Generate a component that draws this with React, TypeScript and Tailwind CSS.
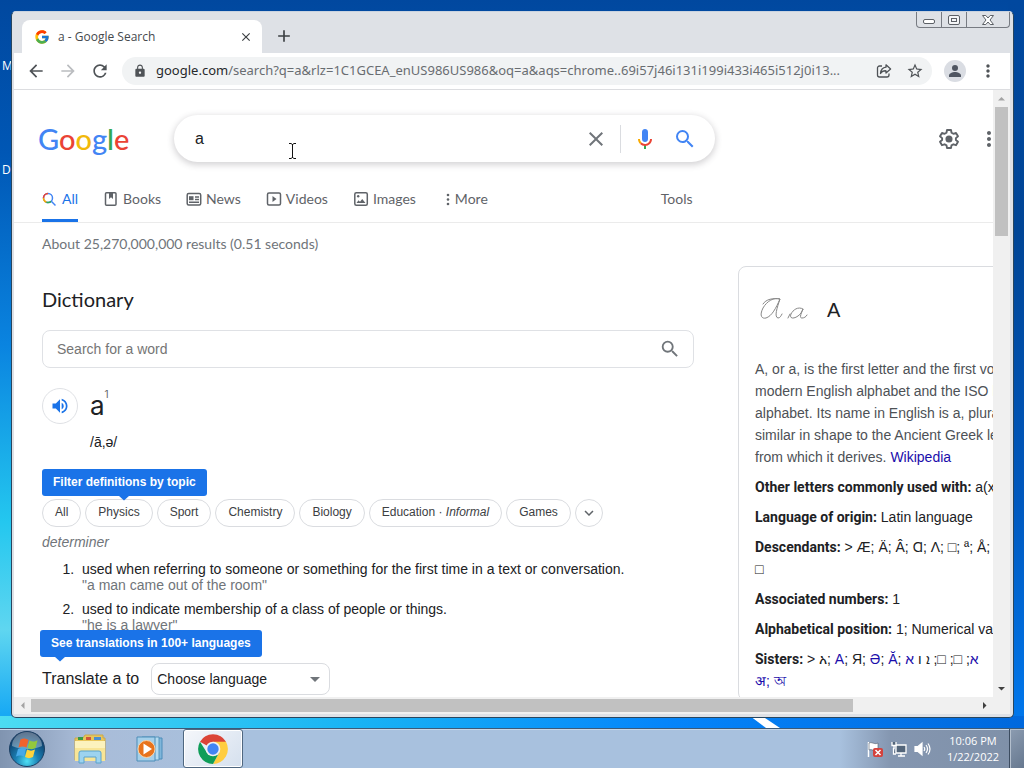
import type { ReactNode } from "react";
import { FcGoogle } from "react-icons/fc";
import {
  MdAdd,
  MdArrowBack,
  MdArrowForward,
  MdClose,
  MdExpandMore,
  MdLock,
  MdMoreVert,
  MdRefresh,
  MdSearch,
  MdStarBorder,
  MdVolumeUp,
} from "react-icons/md";

const segoe = "font-['Open_Sans','Noto_Sans',sans-serif]";
const product = "font-['Lato','Inter',sans-serif]";
const arial = "font-['Liberation_Sans',Arial,sans-serif]";

function TabStrip() {
  return (
    <div className={`${segoe} flex items-start bg-[#dee1e6] pl-2`}>
      <div className="mt-2 flex h-[33px] w-60 items-center rounded-t-lg bg-white pr-2 pl-3">
        <FcGoogle className="size-4" />
        <span className="ml-2 flex-1 text-xs text-[#45494d]">a - Google Search</span>
        <button aria-label="Close tab" className="flex size-4 items-center justify-center text-[#3c4043]">
          <MdClose className="size-3.5" />
        </button>
      </div>
      <button aria-label="New tab" className="mt-3.5 ml-3 text-[#3c4043]">
        <MdAdd className="size-5" />
      </button>
      <div className="ml-auto flex h-4 rounded-b-[4px] border border-t-0 border-[#777b82] text-[#5c6066]">
        <button aria-label="Minimize" className="flex w-[25px] items-center justify-center border-r border-[#777b82]">
          <svg width="14" height="12" viewBox="0 0 14 12" fill="none" stroke="currentColor">
            <rect x="1.5" y="5.5" width="11" height="4" rx="1.5" fill="#fff" />
          </svg>
        </button>
        <button aria-label="Restore" className="flex w-[25px] items-center justify-center border-r border-[#777b82]">
          <svg width="14" height="12" viewBox="0 0 14 12" fill="none" stroke="currentColor">
            <rect x="1.5" y="1.5" width="11" height="9" rx="1.5" fill="#f4f5f7" />
            <rect x="4.5" y="4.5" width="5" height="3" />
          </svg>
        </button>
        <button aria-label="Close" className="flex w-[42px] items-center justify-center">
          <svg width="14" height="12" viewBox="0 0 14 12" fill="#fff" stroke="currentColor">
            <path d="M1.5 1.5h3.3L7 4l2.2-2.5h3.3L9 6l3.5 4.5H9.2L7 8l-2.2 2.5H1.500L5 6z" />
          </svg>
        </button>
      </div>
    </div>
  );
}

function Toolbar() {
  return (
    <div className={`${segoe} flex h-[37px] shrink-0 items-center border-b border-[#dcdde0] bg-white pr-3 pl-3 text-[#4f5357]`}>
      <button aria-label="Back"><MdArrowBack className="size-5" /></button>
      <button aria-label="Forward" className="ml-3 text-[#bbbdc0]"><MdArrowForward className="size-5" /></button>
      <button aria-label="Reload" className="ml-3"><MdRefresh className="size-5" /></button>
      <div className="ml-3 flex h-7 min-w-0 flex-1 items-center rounded-full bg-[#f1f3f4] pr-2 pl-[11px]">
        <MdLock className="size-3.5 shrink-0" />
        <div className="ml-[9px] min-w-0 flex-1 overflow-hidden font-['Noto_Sans',sans-serif] text-[13px] whitespace-nowrap text-[#696d71]">
          <span className="text-[#27292c]">google.com</span>
          /search?q=a&amp;rlz=1C1GCEA_enUS986US986&amp;oq=a&amp;aqs=chrome..69i57j46i131i199i433i465i512j0i13...
        </div>
        <button aria-label="Share" className="mr-3.5">
          <svg width="16" height="16" viewBox="0 0 16 16" fill="none" stroke="currentColor" strokeWidth="1.3" strokeLinejoin="round">
            <path d="M6 3H3.500A2 2 0 0 0 1.500 5v7a2 2 0 0 0 2 2h7.500a2 2 0 0 0 2-2v-1.500" />
            <path d="M10 1.800 14.600 6 10 10V7.800C7.500 7.600 5.800 8.500 4.500 10.500 4.800 7 6.800 4.600 10 4.200z" />
          </svg>
        </button>
        <button aria-label="Bookmark this page"><MdStarBorder className="size-[18px]" /></button>
      </div>
      <button aria-label="Profile" className="ml-3 flex size-[22px] items-center justify-center rounded-full bg-[#dadde3]">
        <svg width="14" height="14" viewBox="0 0 14 14" fill="#4f5561">
          <circle cx="7" cy="4" r="3" />
          <path d="M1 13v-1.500C1 9.200 4.500 8 7 8s6 1.200 6 3.500V13z" />
        </svg>
      </button>
      <button aria-label="Browser menu" className="ml-3"><MdMoreVert className="size-5" /></button>
    </div>
  );
}

function SearchHeader() {
  return (
    <div className="flex items-center pt-[25px] pl-6">
      <a href="#home" aria-label="Google" className={`${product} w-[136px] text-[29px] leading-[46px] font-medium`}>
        <span className="text-[#4285f4]">G</span>
        <span className="text-[#ea4335]">o</span>
        <span className="text-[#f2b90a]">o</span>
        <span className="text-[#4285f4]">g</span>
        <span className="text-[#34a853]">l</span>
        <span className="text-[#ea4335]">e</span>
      </a>
      <form className="flex h-[47px] w-[541px] items-center rounded-full bg-white pr-[18px] pl-[21px] shadow-[0_2px_6px_1px_rgba(64,60,67,0.22)]">
        <input aria-label="Search" defaultValue="a" className={`${arial} min-w-0 flex-1 text-base text-[#202124] outline-none`} />
        <button type="button" aria-label="Clear" className="text-[#70757a]"><MdClose className="size-6" /></button>
        <span className="mx-3 h-7 w-px bg-[#dadce0]" />
        <button type="button" aria-label="Search by voice">
          <svg width="24" height="24" viewBox="0 0 24 24">
            <path fill="#4285f4" d="M12 15c1.700 0 3-1.300 3-3V5c0-1.700-1.300-3-3-3S9 3.300 9 5v7c0 1.700 1.300 3 3 3z" />
            <path fill="#34a853" d="M11 18.100h2V22h-2z" />
            <path fill="#f9ab00" d="M7 12H5c0 1.900.8 3.700 2.100 5l1.400-1.400C7.600 14.700 7 13.400 7 12z" />
            <path fill="#ea4335" d="M12 17c-1.400 0-2.600-.5-3.500-1.400L7.100 17c1.200 1.200 3 2 4.900 2 3.900 0 7-3.100 7-7h-2c0 2.800-2.200 5-5 5z" />
          </svg>
        </button>
        <button type="submit" aria-label="Google Search" className="ml-4 text-[#4285f4]"><MdSearch className="size-6" /></button>
      </form>
      <button aria-label="Settings" className="ml-auto text-[#5f6368]">
        <svg width="24" height="24" viewBox="0 0 24 24" fill="none" stroke="currentColor" strokeWidth="1.9" strokeLinejoin="round">
          <path d="M10 3h4l.5 2.700 1.900 1.100L19 5.900l2 3.400-2.100 1.800v2l2.100 1.700-2 3.400-2.600-.9-1.900 1.100L14 21h-4l-.5-2.600-1.900-1.100-2.600.9-2-3.400 2.100-1.700v-2L3 9.300l2-3.400 2.600.9 1.900-1.100z" />
          <circle cx="12" cy="12" r="2.6" fill="currentColor" />
        </svg>
      </button>
      <button aria-label="Google apps" className="-mr-2 ml-4 text-[#5f6368]"><MdMoreVert className="size-6" /></button>
    </div>
  );
}

function NavIcon({ children }: { children: ReactNode }) {
  return (
    <svg width="16" height="16" viewBox="0 0 16 16" fill="none" stroke="currentColor" strokeWidth="1.5">
      {children}
    </svg>
  );
}

function NavTabs() {
  return (
    <nav className={`${product} mt-4 flex h-[45px] items-stretch gap-[25px] border-b border-[#ebebeb] pl-7 text-[14px] text-[#5f6368]`}>
      <a href="#all" className="flex items-center gap-[5px] border-b-[3px] border-[#1a73e8] text-[#1a73e8]">
        <svg width="15" height="16" viewBox="0 0 15 16" fill="none" strokeWidth="1.5">
          <circle cx="6" cy="7" r="4.5" stroke="#4285f4" />
          <path d="M1.500 7A4.500 4.500 0 0 1 6 2.500" stroke="#ea4335" />
          <path d="M1.500 7a4.500 4.500 0 0 0 3 4.200" stroke="#f9ab00" />
          <path d="M4.500 11.200a4.500 4.500 0 0 0 4.700-1" stroke="#34a853" />
          <path d="m9.300 10.300 4.200 4.200" stroke="#4285f4" />
        </svg>
        All
      </a>
      <a href="#books" className="flex items-center gap-1 pb-[3px]">
        <NavIcon><rect x="2.5" y="1.8" width="10.5" height="12.5" rx="1" /><path d="M6 2v6l2-1.700L10 8V2z" fill="currentColor" stroke="none" /></NavIcon>
        Books
      </a>
      <a href="#news" className="flex items-center gap-1 pb-[3px]">
        <NavIcon><rect x="1.2" y="2.5" width="13.5" height="11.5" rx="1.5" /><path d="M9 6h4M9 8.500h4M3 11.200h10" /><rect x="3" y="5.2" width="4.5" height="4" fill="currentColor" stroke="none" /></NavIcon>
        News
      </a>
      <a href="#videos" className="flex items-center gap-1 pb-[3px]">
        <NavIcon><rect x="1.5" y="2" width="13" height="12" rx="1.5" /><path d="M6.500 5v6l4-3z" fill="currentColor" stroke="none" /></NavIcon>
        Videos
      </a>
      <a href="#images" className="flex items-center gap-1 pb-[3px]">
        <NavIcon><rect x="1.8" y="1.8" width="12.5" height="12.5" rx="1.5" /><path d="M3.500 12l2-2.800 1.500 1.600 2.200-2.800 3.300 4z" fill="currentColor" stroke="none" /><circle cx="5.2" cy="5.2" r="1.2" fill="currentColor" stroke="none" /></NavIcon>
        Images
      </a>
      <button className="ml-1 flex items-center gap-1 pb-[3px]">
        <svg width="6" height="16" viewBox="0 0 6 16" fill="currentColor">
          <circle cx="3" cy="4" r="1.3" /><circle cx="3" cy="8.5" r="1.3" /><circle cx="3" cy="13" r="1.3" />
        </svg>
        More
      </button>
      <button className="ml-[148px] pb-[3px]">Tools</button>
    </nav>
  );
}

function Callout({ children, caret }: { children: ReactNode; caret: string }) {
  return (
    <div className="relative h-[27px] rounded-[3px] bg-[#1a73e8] px-[11px] text-[12px] leading-[27px] font-bold whitespace-nowrap text-white">
      {children}
      <svg width="12" height="6" viewBox="0 0 12 6" className={`absolute top-full -mt-px ${caret}`}>
        <path d="M0 0h12L6 5.500z" fill="#1a73e8" />
      </svg>
    </div>
  );
}

function Chip({ children }: { children: ReactNode }) {
  return (
    <button className="h-7 rounded-full border border-[#dadce0] bg-white px-3 text-[12px] whitespace-nowrap text-[#3c4043]">
      {children}
    </button>
  );
}

function Dictionary() {
  return (
    <main className={`${arial} w-[652px] shrink-0 text-sm`}>
      <p className={`${product} pt-3 leading-[18px] text-[#70757a]`}>About 25,270,000,000 results (0.51 seconds)</p>
      <h1 className={`${product} mt-[35px] text-xl leading-[22px] text-[#202124]`}>Dictionary</h1>
      <label className="mt-5 flex h-[38px] items-center rounded-lg border border-[#dfe1e5] pr-3 pl-3.5 text-[#70757a]">
        <input aria-label="Search for a word" placeholder="Search for a word" className="min-w-0 flex-1 outline-none placeholder:text-[#757575]" />
        <MdSearch className="size-[22px]" />
      </label>
      <div className="mt-5 flex items-center">
        <button aria-label="Listen" className="flex size-9 items-center justify-center rounded-full border border-[#dfe1e5] text-[#1a73e8]">
          <MdVolumeUp className="size-5" />
        </button>
        <h2 className="ml-3 flex items-start font-['Inter',sans-serif] text-[26px] leading-9 text-[#202124]">
          a<sup className="top-0 text-[10px] leading-3 text-[#5f6368]">1</sup>
        </h2>
      </div>
      <p className="mt-2 pl-12 leading-5 text-[#202124]">/ā,ə/</p>
      <div className="mt-[17px] flex">
        <Callout caret="left-[76px]">Filter definitions by topic</Callout>
      </div>
      <div className="mt-[3px] flex gap-1">
        <Chip>All</Chip>
        <Chip>Physics</Chip>
        <Chip>Sport</Chip>
        <Chip>Chemistry</Chip>
        <Chip>Biology</Chip>
        <Chip>Education · <i>Informal</i></Chip>
        <Chip>Games</Chip>
        <button aria-label="More topics" className="flex size-7 items-center justify-center rounded-full border border-[#dadce0] text-[#5f6368]">
          <MdExpandMore className="size-[18px]" />
        </button>
      </div>
      <p className="mt-[7px] leading-4 text-[#70757a] italic">determiner</p>
      <ol className="mt-[11px] flex list-decimal flex-col gap-2 pl-9 leading-4 text-[#202124]">
        <li className="pl-1">
          used when referring to someone or something for the first time in a text or conversation.
          <p className="text-[#70757a]">"a man came out of the room"</p>
        </li>
        <li className="pl-1">
          used to indicate membership of a class of people or things.
          <p className="text-[#70757a]">"he is a lawyer"</p>
        </li>
      </ol>
      <div className="relative -mt-[3px] -ml-0.5 flex">
        <Callout caret="left-[14px]">See translations in 100+ languages</Callout>
      </div>
      <div className="mt-1.5 flex items-center text-[#202124]">
        <label htmlFor="language" className="text-base">Translate a to</label>
        <span className="relative ml-3 flex items-center">
          <select id="language" className="h-8 w-[179px] appearance-none rounded-lg border border-[#dadce0] bg-white pl-[5px] text-sm">
            <option>Choose language</option>
          </select>
          <svg width="10" height="5" viewBox="0 0 10 5" className="pointer-events-none absolute right-2.5">
            <path d="M0 0h10L5 5z" fill="#70757a" />
          </svg>
        </span>
      </div>
    </main>
  );
}

function Fact({ name, children }: { name: string; children: ReactNode }) {
  return (
    <p className="mb-2 leading-[22px] text-[#202124]">
      <b className="font-['Roboto',sans-serif] font-bold">{name}:</b> {children}
    </p>
  );
}

function KnowledgePanel() {
  return (
    <aside className={`${arial} mt-[43px] ml-11 w-[370px] shrink-0 rounded-lg border border-[#dadce0] px-4 text-sm whitespace-nowrap`}>
      <div className="flex h-[91px] items-center pb-1.5 pl-1">
        <svg width="50" height="28" viewBox="0 0 50 28" fill="none" stroke="#888" strokeWidth="1" strokeLinecap="round">
          <path d="M4 8C7 3 14 2 21 3 15 1 8 5 4 12c-4 8-1 11 3 10 6-2 10-10 14-19-3 9-6 18-2 19 2 0 3-2 4-4" />
          <path d="M44 13c-5-3-10 1-12 5-2 5 3 5 7 2 3-2 4-5 5-7-2 5-4 9-1 9 2 0 4-1 5-3M31 18l-2 4" />
        </svg>
        <h2 className="ml-[18px] text-xl text-[#202124]">A</h2>
      </div>
      <p className="mb-2 leading-[22px] text-[#4d5156]">
        A, or a, is the first letter and the first vowel of the<br />
        modern English alphabet and the ISO basic Latin<br />
        alphabet. Its name in English is a, plural aes. It is<br />
        similar in shape to the Ancient Greek letter alpha,<br />
        from which it derives. <a href="#wikipedia" className="text-[#1a0dab]">Wikipedia</a>
      </p>
      <Fact name="Other letters commonly used with">a(x), ae, eau</Fact>
      <Fact name="Language of origin">Latin language</Fact>
      <Fact name="Descendants">&gt; Æ; Ä; Â; Ɑ; Λ; □; ª; Å;<br />□</Fact>
      <Fact name="Associated numbers">1</Fact>
      <Fact name="Alphabetical position">1; Numerical value: 1</Fact>
      <Fact name="Sisters">
        &gt; አ; <span className="text-[#1a0dab]">А</span>; Я; <span className="text-[#1a0dab]">Ә</span>; <span className="text-[#1a0dab]">Ӑ</span>;{" "}
        <bdo dir="ltr"><span className="text-[#1a0dab]">א</span> ו ܐ ;□ ;□ ;<span className="text-[#1a0dab]">א</span></bdo>
        <br /><span className="text-[#1a0dab]">अ; অ</span>
      </Fact>
    </aside>
  );
}

function Arrow({ d, label, tone = "fill-[#404040]" }: { d: string; label: string; tone?: string }) {
  return (
    <button aria-label={label} className="flex size-[17px] shrink-0 items-center justify-center">
      <svg width="9" height="9" viewBox="0 0 9 9" className={tone}><path d={d} /></svg>
    </button>
  );
}

function Browser() {
  return (
    <section className="flex min-h-0 flex-1 flex-col overflow-hidden rounded-[5px] border border-[#28465f] border-t-[#c9d3e0] bg-[#dee1e6] pr-[3px] pb-[3px] pl-0.5">
      <TabStrip />
      <Toolbar />
      <div className="flex min-h-0 flex-1">
        <div className="relative min-w-0 flex-1 overflow-hidden bg-white">
          <SearchHeader />
          <NavTabs />
          <div className="flex pl-7">
            <Dictionary />
            <KnowledgePanel />
          </div>
          <svg width="9" height="16" viewBox="0 0 9 16" fill="none" stroke="#111" className="absolute top-[53px] left-[274px]">
            <path d="M1 .5h2l1.500 1L6 .5h2M1 15.500h2l1.500-1 1.500 1h2M4.500 1v14" />
          </svg>
        </div>
        <div className="flex flex-col items-center bg-[#f0f0f0]">
          <Arrow label="Scroll up" tone="fill-[#a3a3a3]" d="M1 6.500h7L4.500 3z" />
          <div className="h-[129px] w-[13px] bg-[#c1c1c1]" />
          <div className="flex-1" />
          <Arrow label="Scroll down" d="M1 3h7L4.500 6.500z" />
        </div>
      </div>
      <div className="flex items-center bg-[#f0f0f0] pr-[17px]">
        <Arrow label="Scroll left" tone="fill-[#a3a3a3]" d="M6.500 1v7L3 4.500z" />
        <div className="h-[13px] w-[84%] bg-[#c1c1c1]" />
        <div className="flex-1" />
        <Arrow label="Scroll right" d="M3 1v7l3.500-3.500z" />
      </div>
    </section>
  );
}

function StartOrb() {
  return (
    <svg width="38" height="38" viewBox="0 0 38 38">
      <defs>
        <radialGradient id="orb" cx="50%" cy="85%" r="80%">
          <stop offset="0" stopColor="#4fe0f5" /><stop offset=".4" stopColor="#1b80b4" /><stop offset="1" stopColor="#0b2f58" />
        </radialGradient>
      </defs>
      <circle cx="19" cy="19" r="17.5" fill="url(#orb)" stroke="#1b3f63" />
      <path d="M4 16a15 14 0 0 1 30 0c-8 4-22 4-30 0z" fill="#fff" opacity=".35" />
      <path d="M12.500 9.500c3-1.500 5-1.200 8 .5l-2 7.500c-3-1.500-5-1.500-8 0z" fill="#f0622d" />
      <path d="M21.500 10.500c3 1.500 5 1.500 8-.2l-2 7.700c-3 1.500-5 1.500-8 0z" fill="#94c83d" />
      <path d="M10 19c3-1.500 5-1.500 8 0l-2 7.500c-3-1.500-5-1.500-8 0z" fill="#47a9e8" />
      <path d="M19 19.500c3 1.500 5 1.500 8 0l-2 7.500c-3 1.500-5 1.500-8 0z" fill="#ffd33c" />
    </svg>
  );
}

function Taskbar() {
  return (
    <footer className={`${segoe} flex h-10 shrink-0 items-stretch border-t border-[#3c5a78] bg-[linear-gradient(90deg,#8094b0_0%,#a9bcd8_8%,#a8c1de_24%,#a8c1de_82%,#8496b0_87%,#7f90a8_100%)] shadow-[inset_0_1px_0_#c7d8ea]`}>
      <button aria-label="Start" className="ml-2 flex items-center"><StartOrb /></button>
      <button aria-label="File Explorer" className="ml-6 flex w-10 items-center justify-center">
        <svg width="34" height="30" viewBox="0 0 34 30">
          <path d="M2 4h8l2-3h18v3h2v22H2z" fill="#e9c65c" stroke="#c9a84c" />
          <path d="M5 3h5v3H5z" fill="#3a9b46" /><path d="M13 3h5v3h-5z" fill="#d0553c" /><path d="M21 3h7v3h-7z" fill="#4c8fd0" />
          <path d="M2 7h30v20H2z" fill="#f8e596" /><path d="M2 7h30v7H2z" fill="#fcf2bd" />
          <path d="M6 29V19q0-2 2-2h18q2 0 2 2v10h-5v-6H11v6z" fill="#9dd3ef" stroke="#5ba3cc" />
        </svg>
      </button>
      <button aria-label="Media Player" className="ml-5 flex w-10 items-center justify-center">
        <svg width="28" height="26" viewBox="0 0 28 26">
          <path d="M9 2h17v21H9z" fill="#7fb6da" stroke="#4d8dba" /><path d="M6 1h17v23H6z" fill="#b5dbef" stroke="#5796bd" />
          <path d="M1 1h18v24H1z" fill="#a5d0ea" stroke="#4c8db8" />
          <circle cx="10.5" cy="13" r="8.5" fill="#e8731c" stroke="#f7d2a8" /><path d="M7.500 7.500v11l8.500-5.500z" fill="#fff" />
        </svg>
      </button>
      <button aria-label="Chrome" className="ml-[13px] flex w-[60px] items-center justify-center rounded-[3px] border border-[#4f6780] bg-[linear-gradient(135deg,#f5f7fb,#d5e0ee)] shadow-[inset_0_0_0_1px_#fff]">
        <svg width="32" height="32" viewBox="0 0 48 48">
          <path d="M24 24 4.500 13A22.500 22.500 0 0 1 43.500 13z" fill="#db4437" />
          <path d="M24 13h19.500A22.500 22.500 0 0 1 24 46.500L33.500 29z" fill="#ffcd40" />
          <path d="M4.500 13A22.500 22.500 0 0 0 24 46.500L33.500 29 24 34l-9.500-5z" fill="#0f9d58" />
          <circle cx="24" cy="24" r="11" fill="#f1f1f1" /><circle cx="24" cy="24" r="8.5" fill="#4285f4" />
        </svg>
      </button>
      <div className="ml-auto flex items-center gap-[7px] text-white">
        <svg width="18" height="18" viewBox="0 0 18 18">
          <path d="M2.500 2v15" stroke="#fff" strokeWidth="1.5" /><path d="M3 3c3-1.500 5 2 9 0v7c-4 2-6-1.500-9 0z" fill="#fff" stroke="#4b5868" strokeWidth=".6" />
          <rect x="7" y="8" width="10" height="9" rx="2" fill="#d4423d" /><path d="m9.500 10 5 5m0-5-5 5" stroke="#fff" strokeWidth="1.5" />
        </svg>
        <svg width="16" height="16" viewBox="0 0 16 16" fill="#53657a" stroke="#fff" strokeWidth="1.3">
          <path d="M5 4h10v8H5zM7 15h7M10 12v3M2.500 7v6H5" /><path d="M1 1v3.500h4V1M3 4.500V8" />
        </svg>
        <svg width="17" height="16" viewBox="0 0 17 16" fill="none" stroke="#fff" strokeWidth="1.2">
          <path d="M1 5.500h3L8 2v12l-4-3.500H1z" fill="#fff" /><path d="M10 6q1.500 2 0 4M12 4q3 4 0 8M14 2.500q4 5.500 0 11" />
        </svg>
      </div>
      <time className="ml-3.5 w-14 self-center text-center text-[11px] leading-4 whitespace-nowrap text-white">10:06 PM<br />1/22/2022</time>
      <button aria-label="Show desktop" className="ml-2 w-[15px] border-l border-[#3c4c60] bg-[linear-gradient(135deg,#8c9cb1,#66788f)] shadow-[inset_1px_1px_0_#b3bfcd]" />
    </footer>
  );
}

export default function App() {
  return (
    <div className="relative flex h-screen flex-col overflow-hidden bg-[linear-gradient(180deg,#01489f_0%,#0057b5_20%,#0a84e0_45%,#24c7ef_68%,#5fd6f0_82%,#18a9f4_93%)]">
      <div className="absolute inset-y-0 right-0 w-4 bg-[linear-gradient(180deg,#01489f_0%,#004596_30%,#0058be_65%,#0078ee_95%)]" />
      <svg width="100%" height="12" viewBox="0 0 1024 12" preserveAspectRatio="none" className="absolute bottom-10 left-0">
        <defs><linearGradient id="glow"><stop offset="0" stopColor="#4cdcf2" /><stop offset=".35" stopColor="#18b3f4" /><stop offset=".65" stopColor="#0585fa" /><stop offset="1" stopColor="#0068dd" /></linearGradient></defs>
        <path d="M0 0h1024v12H0z" fill="url(#glow)" /><path d="M750 0h12l18 12h-14z" fill="#fff" />
      </svg>
      <div className={`${segoe} absolute top-[58px] left-0.5 text-xs leading-4 text-white`}>M</div>
      <div className={`${segoe} absolute top-[162px] left-0.5 text-xs leading-4 text-white`}>D</div>
      <div className="relative flex min-h-0 flex-1 pt-[11px] pr-2.5 pb-2.5 pl-[11px]">
        <div className="flex min-w-0 flex-1 flex-col"><Browser /></div>
      </div>
      <div className="relative"><Taskbar /></div>
    </div>
  );
}
